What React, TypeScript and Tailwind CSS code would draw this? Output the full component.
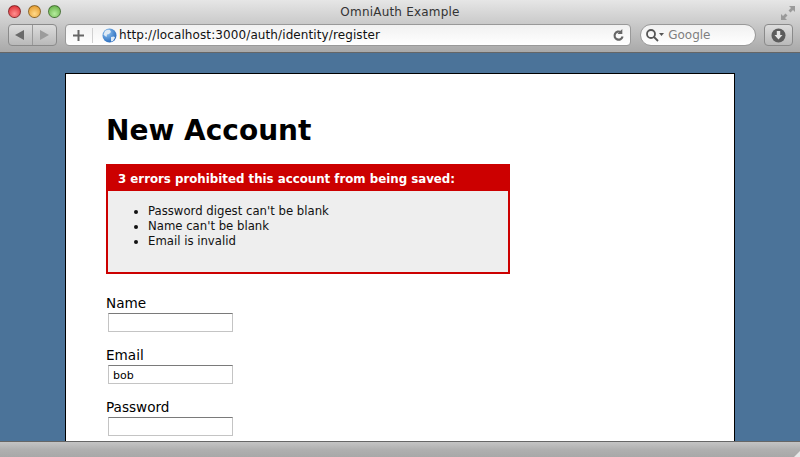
import React from 'react';

const fields = [
  { label: 'Name', value: '' },
  { label: 'Email', value: 'bob' },
  { label: 'Password', value: '' },
];

const errors = ["Password digest can't be blank", "Name can't be blank", 'Email is invalid'];

const Light = ({ className }: { className: string }) => (
  <div className={`w-[13px] h-[13px] rounded-full border border-black/40 ${className}`} />
);

const App: React.FC = () => {
  return (
    <div className="w-[800px] h-[457px] flex flex-col overflow-hidden bg-[#4b7399] font-['DejaVu_Sans',sans-serif]">
      {/* window chrome */}
      <div className="h-[53px] shrink-0 flex flex-col bg-gradient-to-b from-[#e6e6e6] to-[#a9a9a9] border-b border-[#666666]">
        <div className="h-[22px] flex items-center justify-between pl-2 pr-[4px] relative">
          <div className="flex gap-[7px]">
            <Light className="bg-[radial-gradient(circle_at_50%_70%,#ff8f8f,#d81f26)]" />
            <Light className="bg-[radial-gradient(circle_at_50%_70%,#ffd98a,#e0901c)]" />
            <Light className="bg-[radial-gradient(circle_at_50%_70%,#b5ec9c,#5aa83c)]" />
          </div>
          <div className="absolute inset-x-0 top-[3px] text-center text-[12px] leading-[18px] tracking-[0.2px] text-[#333333]">
            OmniAuth Example
          </div>
          <svg width="16" height="16" viewBox="0 0 16 16" className="mt-[3px] text-[#9a9a9a]" fill="currentColor">
            <path d="M9 1h6v6l-2-2-2.500 2.500-2-2L11 3zM7 15H1V9l2 2 2.500-2.500 2 2L5 13z" />
          </svg>
        </div>
        <div className="flex items-center pl-2 pr-[7px] pt-[2px]">
          <div className="w-[49px] h-[22px] flex rounded-[4px] border border-[#8a8a8a] bg-gradient-to-b from-[#dddddd] to-[#b9b9b9]">
            <div className="flex-1 flex items-center justify-center border-r border-[#999999]">
              <svg width="10" height="10" viewBox="0 0 10 10"><path d="M0 5l9-5v10z" fill="#6a6a6a" /></svg>
            </div>
            <div className="flex-1 flex items-center justify-center">
              <svg width="10" height="10" viewBox="0 0 10 10"><path d="M10 5L1 0v10z" fill="#9c9c9c" /></svg>
            </div>
          </div>
          <div className="ml-2 w-[567px] h-[22px] flex items-center rounded-[4px] border border-[#999999] bg-gradient-to-b from-[#f1f1f1] to-[#ffffff]">
            <div className="w-[27px] h-[15px] flex items-center justify-center border-r border-[#d0d0d0]">
              <svg width="11" height="11" viewBox="0 0 11 11"><path d="M4.500 0h2v4.500H11v2H6.500V11h-2V6.500H0v-2h4.500z" fill="#666666" /></svg>
            </div>
            <svg width="15" height="15" viewBox="0 0 15 15" className="ml-[9px]">
              <defs>
                <radialGradient id="globe" cx="35%" cy="30%" r="80%">
                  <stop offset="0%" stopColor="#8fc4f2" />
                  <stop offset="100%" stopColor="#1f63b8" />
                </radialGradient>
              </defs>
              <circle cx="7.500" cy="7.500" r="7" fill="url(#globe)" />
              <path d="M3 3c2-1.500 4-1.500 5-1l1 2-2 2-2 .5-.5 2.500L3 8 1.500 6.500zM9 9l3-.5 1 1-2 3.500-2 .5z" fill="#dfeaf4" />
            </svg>
            <span className="ml-[2px] flex-1 text-[12px] leading-[19px] tracking-[0.1px] text-[#111111]">
              http://localhost:3000/auth/identity/register
            </span>
            <svg width="13" height="13" viewBox="0 0 24 24" fill="none" stroke="#666666" strokeWidth="4" className="mr-[5px]">
              <path d="M19.500 14a7.500 7.500 0 1 1-3-8" />
              <path d="M19 0v9h-9" fill="#666666" stroke="none" />
            </svg>
          </div>
          <div className="ml-[9px] w-[116px] h-[22px] flex items-center rounded-full border border-[#999999] bg-gradient-to-b from-[#f1f1f1] to-[#ffffff] pl-[4px]">
            <svg width="20" height="14" viewBox="0 0 20 14" fill="none" stroke="#555555" strokeWidth="1.800">
              <circle cx="6" cy="6" r="4" />
              <path d="M9 9l4 4" />
              <path d="M14 5h5l-2.500 3z" fill="#555555" stroke="none" />
            </svg>
            <span className="ml-[3px] text-[12px] leading-[18px] text-[#7f7f7f]">Google</span>
          </div>
          <div className="ml-2 w-[29px] h-[22px] flex items-center justify-center rounded-[4px] border border-[#8a8a8a] bg-gradient-to-b from-[#dddddd] to-[#b9b9b9]">
            <svg width="15" height="15" viewBox="0 0 15 15">
              <circle cx="7.500" cy="7.500" r="7" fill="#5c5c5c" />
              <path d="M5.800 3h3.400v4h2.300l-4 4.500-4-4.500h2.300z" fill="#e4e4e4" />
            </svg>
          </div>
        </div>
      </div>

      {/* page */}
      <div className="flex-1 min-h-0 overflow-hidden pt-5 pl-[65px] pr-[65px]">
        <div className="h-[400px] bg-white border border-black pl-10 pt-[38px] text-black">
          <h1 className="text-[28px] leading-[37px] font-bold">New Account</h1>
          <div className="w-[404px] h-[110px] mt-[15px] border-2 border-[#cc0000] bg-[#eeeeee]">
            <h2 className="h-[25px] bg-[#cc0000] pl-[10px] pt-[2px] text-[11.800px] leading-[22px] font-bold text-white">
              3 errors prohibited this account from being saved:
            </h2>
            <ul className="list-disc pl-10 pt-[13px] text-[11.700px] leading-[15px] text-[#111111]">
              {errors.map((err) => (
                <li key={err}>{err}</li>
              ))}
            </ul>
          </div>
          <div className="mt-[21px] flex flex-col gap-[15px]">
            {fields.map((f) => (
              <div key={f.label}>
                <div className="text-[13.600px] leading-[17px]">{f.label}</div>
                <div className="ml-[2px] mt-[1px] w-[125px] h-[19px] border border-[#c4c4c4] border-t-[#7a7a7a] bg-white pl-[4px] text-[11px] leading-[19px]">
                  {f.value}
                </div>
              </div>
            ))}
          </div>
        </div>
      </div>

      {/* status bar */}
      <div className="h-[16px] shrink-0 flex justify-end items-end bg-gradient-to-b from-[#c4c4c4] via-[#b0b0b0] to-[#a8a8a8] border-t border-[#666666]">
        <svg width="6" height="6" viewBox="0 0 6 6"><path d="M6 0v6H0z" fill="#e8e8e8" /></svg>
      </div>
    </div>
  );
};

export default App;
